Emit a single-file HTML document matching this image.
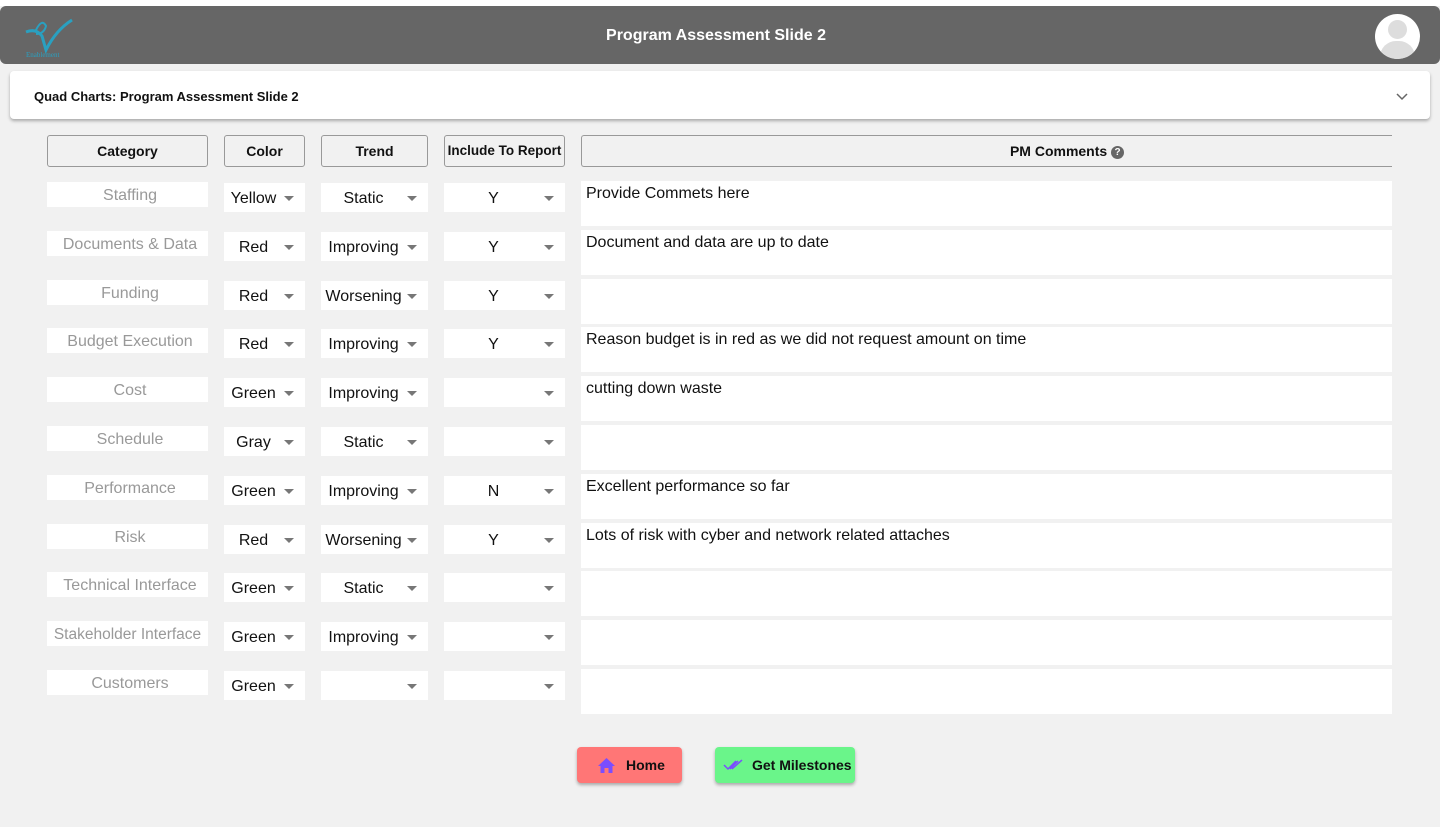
<!DOCTYPE html>
<html><head><meta charset="utf-8"><style>
*{box-sizing:border-box;margin:0;padding:0}
body{width:1440px;height:827px;background:#f1f1f1;font-family:"Liberation Sans",Arial,sans-serif;position:relative;overflow:hidden}
.top{position:absolute;left:0;top:0;width:1440px;height:6px;background:#fff}
.hdr{position:absolute;left:0;top:6px;width:1440px;height:58px;background:#666;border-radius:6px}
.hdr .t{position:absolute;left:0;right:8px;top:21px;text-align:center;color:#fff;font-weight:bold;font-size:16px}
.av{position:absolute;left:1375px;top:8px;width:45px;height:45px;border-radius:50%;background:#fff;overflow:hidden}
.card{position:absolute;left:10px;top:71px;width:1420px;height:48px;background:#fff;border-radius:4px;box-shadow:0 2px 3px rgba(0,0,0,.3)}
.card .t{position:absolute;left:24px;top:18px;font-size:13px;font-weight:bold;color:#111}
.h{position:absolute;top:135px;height:32px;border:1px solid #999;border-radius:3px;background:#f1f1f1;font-weight:bold;font-size:14px;text-align:center;line-height:30px;color:#111}
.cat{position:absolute;left:47px;width:161px;height:25px;background:#fff;color:#999;font-size:16px;text-align:center;line-height:27px;padding-left:5px;white-space:nowrap}
.sel{position:absolute;height:29px;background:#fff;font-size:16px;color:#111;line-height:32px}
.sel span{position:absolute;left:0;right:22px;text-align:center}
.sel i{position:absolute;right:11px;top:13px;border-left:5px solid transparent;border-right:5px solid transparent;border-top:5px solid #777}
.cm{position:absolute;left:581px;width:811px;height:45px;background:#fff;font-size:16px;color:#111;padding:4px 5px}
.btn{position:absolute;top:747px;height:36px;border-radius:4px;box-shadow:0 2px 3px rgba(0,0,0,.3);font-size:14px;font-weight:bold;color:#111;line-height:36px}
</style></head><body>
<div class="top"></div>
<div class="hdr">
<svg style="position:absolute;left:22px;top:6px" width="54" height="46" viewBox="0 0 54 46"><path d="M4 20 Q14 16 20 24 L24 38 Q34 18 50 8" stroke="#2aa0c0" stroke-width="3" fill="none"/><path d="M14 18 Q20 6 24 14 Q22 22 14 22" stroke="#2aa0c0" stroke-width="2" fill="none"/><text x="4" y="45" font-size="7" fill="#2aa0c0" font-family="Liberation Serif">Enablement</text></svg>
<div class="t">Program Assessment Slide 2</div>
<div class="av"><div style="position:absolute;left:13px;top:6px;width:19px;height:19px;border-radius:50%;background:#ddd"></div><div style="position:absolute;left:5px;top:27px;width:35px;height:26px;border-radius:16px 16px 0 0;background:#ddd"></div></div>
</div>
<div class="card"><div class="t">Quad Charts: Program Assessment Slide 2</div>
<svg style="position:absolute;left:1386px;top:22px" width="12" height="8"><path d="M1 1 L6 6 L11 1" stroke="#666" stroke-width="1.5" fill="none"/></svg></div>
<div class="h" style="left:47px;width:161px">Category</div>
<div class="h" style="left:224px;width:81px">Color</div>
<div class="h" style="left:321px;width:107px">Trend</div>
<div class="h" style="left:444px;width:121px;font-size:13.5px">Include To Report</div>
<div class="h" style="left:581px;width:811px;border-right:none;border-radius:3px 0 0 3px;padding-left:160px">PM Comments <span style="display:inline-block;width:13px;height:13px;border-radius:50%;background:#666;color:#fff;font-size:10px;line-height:13px;vertical-align:1px">?</span></div>

<div class="cat" style="top:182px">Staffing</div><div class="sel" style="left:224px;width:81px;top:183px"><span>Yellow</span><i></i></div><div class="sel" style="left:321px;width:107px;top:183px"><span>Static</span><i></i></div><div class="sel" style="left:444px;width:121px;top:183px"><span>Y</span><i></i></div><div class="cm" style="top:181px">Provide Commets here</div>
<div class="cat" style="top:231px">Documents &amp; Data</div><div class="sel" style="left:224px;width:81px;top:232px"><span>Red</span><i></i></div><div class="sel" style="left:321px;width:107px;top:232px"><span>Improving</span><i></i></div><div class="sel" style="left:444px;width:121px;top:232px"><span>Y</span><i></i></div><div class="cm" style="top:230px">Document and data are up to date</div>
<div class="cat" style="top:280px">Funding</div><div class="sel" style="left:224px;width:81px;top:281px"><span>Red</span><i></i></div><div class="sel" style="left:321px;width:107px;top:281px"><span>Worsening</span><i></i></div><div class="sel" style="left:444px;width:121px;top:281px"><span>Y</span><i></i></div><div class="cm" style="top:279px"></div>
<div class="cat" style="top:328px">Budget Execution</div><div class="sel" style="left:224px;width:81px;top:329px"><span>Red</span><i></i></div><div class="sel" style="left:321px;width:107px;top:329px"><span>Improving</span><i></i></div><div class="sel" style="left:444px;width:121px;top:329px"><span>Y</span><i></i></div><div class="cm" style="top:327px">Reason budget is in red as we did not request amount on time</div>
<div class="cat" style="top:377px">Cost</div><div class="sel" style="left:224px;width:81px;top:378px"><span>Green</span><i></i></div><div class="sel" style="left:321px;width:107px;top:378px"><span>Improving</span><i></i></div><div class="sel" style="left:444px;width:121px;top:378px"><span></span><i></i></div><div class="cm" style="top:376px">cutting down waste</div>
<div class="cat" style="top:426px">Schedule</div><div class="sel" style="left:224px;width:81px;top:427px"><span>Gray</span><i></i></div><div class="sel" style="left:321px;width:107px;top:427px"><span>Static</span><i></i></div><div class="sel" style="left:444px;width:121px;top:427px"><span></span><i></i></div><div class="cm" style="top:425px"></div>
<div class="cat" style="top:475px">Performance</div><div class="sel" style="left:224px;width:81px;top:476px"><span>Green</span><i></i></div><div class="sel" style="left:321px;width:107px;top:476px"><span>Improving</span><i></i></div><div class="sel" style="left:444px;width:121px;top:476px"><span>N</span><i></i></div><div class="cm" style="top:474px">Excellent performance so far</div>
<div class="cat" style="top:524px">Risk</div><div class="sel" style="left:224px;width:81px;top:525px"><span>Red</span><i></i></div><div class="sel" style="left:321px;width:107px;top:525px"><span>Worsening</span><i></i></div><div class="sel" style="left:444px;width:121px;top:525px"><span>Y</span><i></i></div><div class="cm" style="top:523px">Lots of risk with cyber and network related attaches</div>
<div class="cat" style="top:572px">Technical Interface</div><div class="sel" style="left:224px;width:81px;top:573px"><span>Green</span><i></i></div><div class="sel" style="left:321px;width:107px;top:573px"><span>Static</span><i></i></div><div class="sel" style="left:444px;width:121px;top:573px"><span></span><i></i></div><div class="cm" style="top:571px"></div>
<div class="cat" style="top:621px;font-size:15.5px;padding-left:0">Stakeholder Interface</div><div class="sel" style="left:224px;width:81px;top:622px"><span>Green</span><i></i></div><div class="sel" style="left:321px;width:107px;top:622px"><span>Improving</span><i></i></div><div class="sel" style="left:444px;width:121px;top:622px"><span></span><i></i></div><div class="cm" style="top:620px"></div>
<div class="cat" style="top:670px">Customers</div><div class="sel" style="left:224px;width:81px;top:671px"><span>Green</span><i></i></div><div class="sel" style="left:321px;width:107px;top:671px"><span></span><i></i></div><div class="sel" style="left:444px;width:121px;top:671px"><span></span><i></i></div><div class="cm" style="top:669px"></div>

<div class="btn" style="left:577px;width:105px;background:#ff7676"><svg style="position:absolute;left:21px;top:11px" width="17" height="15" viewBox="0 0 17 15"><path d="M8.5 0 L17 8 L14.5 8 L14.5 15 L10.5 15 L10.5 10 L6.5 10 L6.5 15 L2.5 15 L2.5 8 L0 8 Z" fill="#7b4dff"/></svg><span style="position:absolute;left:49px">Home</span></div>
<div class="btn" style="left:715px;width:140px;background:#6af58a"><svg style="position:absolute;left:8px;top:12px" width="20" height="12" viewBox="0 0 20 12"><path d="M1 6 L5 10 L13 2 M7 10 L15 2 M9 10 L19 1" stroke="#7b4dff" stroke-width="1.5" fill="none"/></svg><span style="position:absolute;left:37px">Get Milestones</span></div>
</body></html>
